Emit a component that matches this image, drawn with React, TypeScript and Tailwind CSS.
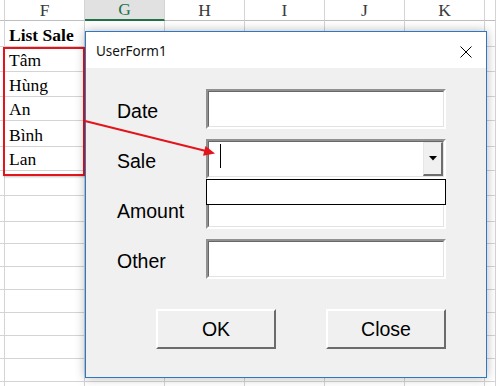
import React from "react";

const headers = ["", "F", "G", "H", "I", "J", "K", ""];
const rowCount = 16;
const cellText: Record<number, string> = {
  0: "List Sale",
  1: "Tâm",
  2: "Hùng",
  3: "An",
  4: "Bình",
  5: "Lan",
};

function Sheet() {
  const cells: React.ReactNode[] = [];
  headers.forEach((h, i) => {
    cells.push(
      <div
        key={`h${i}`}
        className={
          i === 2
            ? "flex items-center justify-center bg-[#e1e1e1] border-b-2 border-b-[#217346] border-r border-r-[#d4d4d4] text-[#217346]"
            : "flex items-center justify-center bg-white border-b border-b-[#bfbfbf] border-r border-r-[#d4d4d4] text-[#3a3a3a]"
        }
      >
        {h}
      </div>
    );
  });
  for (let r = 0; r < rowCount; r++) {
    for (let c = 0; c < headers.length; c++) {
      const txt = c === 1 ? cellText[r] : undefined;
      cells.push(
        <div
          key={`c${r}-${c}`}
          className={
            c === 2 && r === 7
              ? "border-r border-b border-[#d4d4d4] border-l-2 border-l-[#217346]"
              : "flex items-end pl-[4px] pb-[1px] border-r border-b border-[#d4d4d4] whitespace-nowrap overflow-hidden"
          }
        >
          {txt ? (
            <span className={r === 0 ? "font-bold leading-[20px]" : "leading-[20px]"}>{txt}</span>
          ) : null}
        </div>
      );
    }
  }
  return (
    <div className="grid grid-cols-[5px_80px_80px_80px_80px_80px_80px_11px] grid-rows-[21px_26px_25px_24.5px_24.5px_25.5px_24.5px_25px_25.5px_22.5px_23px_23px_23px_23px_23px_23px_23px] font-['Liberation_Serif',serif] text-[17.5px] text-black">
      {cells}
    </div>
  );
}

function TextBox({ children }: { children?: React.ReactNode }) {
  return (
    <div className="w-[240px] h-[40px] border-t-2 border-l-2 border-t-[#919191] border-l-[#919191] border-b-2 border-r-2 border-b-white border-r-white">
      <div className="w-full h-full bg-white border-t border-l border-t-[#676767] border-l-[#676767] border-b border-r border-b-[#e3e3e3] border-r-[#e3e3e3] flex items-start">
        {children}
      </div>
    </div>
  );
}

function Row({ label, children }: { label: string; children?: React.ReactNode }) {
  return (
    <div className="flex items-center h-[40px]">
      <div className="w-[89px] leading-none mt-[6px]">{label}</div>
      {children}
    </div>
  );
}

function Button({ label }: { label: string }) {
  return (
    <div className="w-[120px] h-[40px] bg-[#f0f0f0] border-t-2 border-l-2 border-t-white border-l-white border-b-2 border-r-2 border-b-[#6b6b6b] border-r-[#6b6b6b] flex items-center justify-center leading-none pt-[2px]">
      {label}
    </div>
  );
}

function Dialog() {
  return (
    <div className="absolute left-[85px] top-[31px] w-[402px] h-[347px] border border-[#2b79c6] bg-[#f0f0f0] shadow-[0_0_10px_rgba(0,0,0,0.28)] flex flex-col">
      <div className="h-[36px] bg-white flex items-center justify-between pl-[10px] pr-[14px]">
        <span className="font-['Noto_Sans',sans-serif] text-[13.5px] text-[#111] leading-none mt-[3px]">UserForm1</span>
        <svg width="12" height="12" viewBox="0 0 12 12" className="block mt-[3px]">
          <path d="M0.5 0.5 L11.5 11.5 M11.5 0.5 L0.5 11.5" stroke="#000" strokeWidth="1" fill="none" />
        </svg>
      </div>
      <div className="relative flex-1 pt-[21px] pl-[31px] flex flex-col font-['Liberation_Sans',sans-serif] text-[19.5px] text-black">
        <div className="flex flex-col gap-[10px]">
          <Row label="Date">
            <TextBox />
          </Row>
          <Row label="Sale">
            <TextBox>
              <div className="ml-[11px] mt-[2px] w-px h-[24px] bg-black" />
              <div className="ml-auto w-[20px] h-full bg-[#f0f0f0] border-t border-l border-t-[#e6e6e6] border-l-[#e6e6e6] border-r-2 border-b-2 border-r-[#6d6d6d] border-b-[#6d6d6d] flex items-center justify-center">
                <svg width="8" height="5" viewBox="0 0 8 5" className="block">
                  <polygon points="0,0 8,0 4,4.5" fill="#000" />
                </svg>
              </div>
            </TextBox>
          </Row>
          <Row label="Amount">
            <TextBox />
          </Row>
          <Row label="Other">
            <TextBox />
          </Row>
        </div>
        <div className="flex mt-[30px] ml-[39px] gap-[50px]">
          <Button label="OK" />
          <Button label="Close" />
        </div>
        <div className="absolute left-[120px] top-[111px] w-[240px] h-[26px] bg-white border border-black" />
      </div>
    </div>
  );
}

export default function App() {
  return (
    <div className="relative w-[496px] h-[386px] overflow-hidden bg-white">
      <Sheet />
      <div className="absolute left-[3px] top-[47px] w-[82px] h-[129px] border-2 border-[#e3141c] shadow-[1px_1px_2px_rgba(0,0,0,0.25)]" />
      <Dialog />
      <svg className="absolute inset-0 pointer-events-none" width="496" height="386" viewBox="0 0 496 386">
        <line x1="85" y1="121" x2="206" y2="151" stroke="#e3141c" strokeWidth="2" />
        <polygon points="215,153.5 205.5,145.9 203.1,155.7" fill="#e3141c" />
      </svg>
    </div>
  );
}
